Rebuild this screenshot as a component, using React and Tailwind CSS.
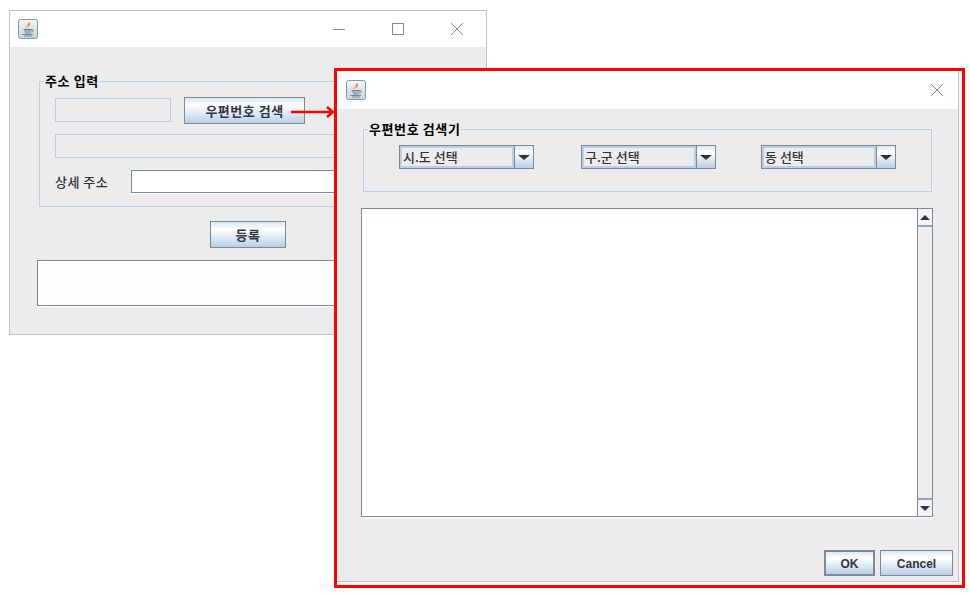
import React from 'react';

const KR = "font-['Noto_Sans_CJK_KR','Liberation_Sans',sans-serif]";
const BTN = 'bg-[linear-gradient(#dde8f3,#ffffff_30%,#b8cfe5)] border border-[#7a8a99]';

// Java coffee cup in the title bar
const JavaIcon = () => (
  <svg width="20" height="20" viewBox="0 0 20 20" className="block">
    <defs>
      <linearGradient id="tile" x1="0" y1="0" x2="0" y2="1">
        <stop offset="0" stopColor="#f4f4f4" />
        <stop offset="1" stopColor="#c9d3dc" />
      </linearGradient>
    </defs>
    <rect x="0.5" y="0.5" width="19" height="19" rx="2" fill="url(#tile)" stroke="#7f9bb0" />
    <path d="M10.500 2.500c1 1.500-1.500 2.500-1 4.500.2.8.6 1.300 1 1.500-.2-1 .3-1.500 1.200-2.300C12.800 5.300 12 3.500 10.500 2.500z" fill="#e8873a" />
    <path d="M7 8c.8-1 1.500-1.200 2-1.500-.5 1-.5 1.500 0 2.500-1 0-1.700-.3-2-1z" fill="#f0a868" />
    <path d="M5.500 10.500h8.500M6 12h7.500M7 14h5.500" stroke="#5f7f9a" strokeWidth="1" fill="none" />
    <path d="M14 10.500c1.800 0 1.800 2.500-.8 2.700" stroke="#5f7f9a" strokeWidth="1" fill="none" />
    <path d="M4 15.500h11M6 17h8" stroke="#6f8ca5" strokeWidth="1" fill="none" />
  </svg>
);

const CloseGlyph = () => (
  <svg width="14" height="14" viewBox="0 0 14 14" className="block">
    <path d="M1 1l12 12M13 1L1 13" stroke="#8a8a8a" strokeWidth="1" fill="none" />
  </svg>
);

const Group = ({ title, className, children }) => (
  <fieldset className={`border border-[#b8cfe5] ${className}`}>
    <legend className={`ml-[4px] px-[1px] h-[16px] leading-[16px] text-[13px] font-bold tracking-[0.6px] text-black ${KR}`}>{title}</legend>
    {children}
  </fieldset>
);

const Button = ({ className, children }) => (
  <button className={`${BTN} flex items-center justify-center text-[13px] font-bold tracking-[0.5px] text-[#333344] ${KR} ${className}`}>
    {children}
  </button>
);

const Combo = ({ label }) => (
  <div className="flex w-[135px] h-[24px] border border-[#7a8a99]">
    <div className={`flex-1 bg-[#ececec] border-2 border-[#b8cfe5] pl-[1px] text-[13px] leading-[18px] font-medium text-[#333333] ${KR}`}>{label}</div>
    <div className={`w-[19px] ${BTN} !border-y-0 !border-r-0 flex items-center justify-center`}>
      <div className="w-0 h-0 border-x-[6px] border-x-transparent border-t-[5px] border-t-[#333333]" />
    </div>
  </div>
);

const ScrollArrow = ({ up }) => (
  <div className="h-[16px] flex items-center justify-center bg-[#f2f4f7]">
    <div className={`w-0 h-0 border-x-[5px] border-x-transparent ${up ? 'border-b-[5px] border-b-[#333333]' : 'border-t-[5px] border-t-[#333333]'}`} />
  </div>
);

const App = () => (
  <div className="relative w-[970px] h-[596px] bg-white overflow-hidden">
    {/* address input window */}
    <div className="absolute left-[9px] top-[10px] w-[478px] h-[325px] border border-[#c0c0c0] flex flex-col">
      <div className="h-[36px] bg-white flex items-center pl-[8px] shrink-0">
        <JavaIcon />
        <div className="ml-auto flex items-center pr-[22px]">
          <div className="w-[12px] h-px bg-[#8a8a8a] mr-[47px]" />
          <div className="w-[12px] h-[12px] border border-[#8a8a8a] mr-[46px]" />
          <CloseGlyph />
        </div>
      </div>
      <div className="flex-1 bg-[#ececec] pl-[27px] pt-[26px]">
        <Group title="주소 입력" className="ml-[2px] w-[432px] pb-[13px]">
          <div className="pl-[15px]">
            <div className="flex items-start pt-[8px]">
              <div className="mt-[1px] w-[116px] h-[24px] border border-[#b8cfe5]" />
              <Button className="ml-[13px] w-[121px] h-[27px]">우편번호 검색</Button>
            </div>
            <div className="mt-[10px] w-[300px] h-[24px] border border-[#b8cfe5]" />
            <div className="mt-[12px] flex items-center">
              <span className={`w-[76px] text-[13px] leading-[23px] tracking-[0.5px] font-medium text-[#333333] ${KR}`}>상세 주소</span>
              <div className="w-[300px] h-[23px] bg-white border border-[#7a8a99] shadow-[0_1px_0_#ffffff]" />
            </div>
          </div>
        </Group>
        <Button className="mt-[14px] ml-[173px] w-[76px] h-[27px]">등록</Button>
        <div className="mt-[12px] w-[420px] h-[46px] bg-[#fdfdfd] border-l border-t border-b border-[#7a8a99] shadow-[0_1px_0_#ffffff]" />
      </div>
    </div>

    {/* arrow between the button and the dialog */}
    <svg width="46" height="14" viewBox="0 0 46 14" className="absolute left-[290px] top-[105px]">
      <path d="M1 7h42M37 2l6 5-6 5" stroke="#ff0000" strokeWidth="2.400" fill="none" />
    </svg>

    {/* zip code dialog, red highlight around it */}
    <div className="absolute left-[334px] top-[68px] w-[631px] h-[520px] border-[3px] border-[#ff0000] bg-[#f7f7f7] pr-[3px] pb-[3px]">
      <div className="h-full flex flex-col border-r border-b border-[#c0c0c0]">
        <div className="h-[38px] bg-white flex items-center pl-[9px] shrink-0">
          <JavaIcon />
          <div className="ml-auto pr-[14px]">
            <CloseGlyph />
          </div>
        </div>
        <div className="flex-1 bg-[#ececec] pl-[24px] pt-[12px]">
          <Group title="우편번호 검색기" className="ml-[2px] w-[569px] pb-[22px]">
            <div className="flex pl-[35px] pt-[8px]">
              <Combo label="시.도 선택" />
              <div className="w-[47px]" />
              <Combo label="구.군 선택" />
              <div className="w-[45px]" />
              <Combo label="동 선택" />
            </div>
          </Group>
          <div className="mt-[16px] w-[572px] h-[309px] bg-white border border-[#7a8a99] flex justify-end shadow-[0_1px_0_#ffffff]">
            <div className="w-[15px] h-full bg-[#eeeeee] border-l border-[#7a8a99] flex flex-col">
              <div className="border-b-2 border-[#8fa5b8]"><ScrollArrow up /></div>
              <div className="flex-1" />
              <div className="border-t-2 border-[#8fa5b8]"><ScrollArrow /></div>
            </div>
          </div>
          <div className="mt-[33px] flex justify-end gap-[5px] pr-[5px]">
            <button className={`${BTN} !border-2 w-[51px] h-[26px] pt-[1px] text-[12px] font-bold text-[#333344] font-['Liberation_Sans',sans-serif]`}>OK</button>
            <button className={`${BTN} w-[73px] h-[26px] pt-[1px] text-[12px] font-bold text-[#333344] font-['Liberation_Sans',sans-serif]`}>Cancel</button>
          </div>
        </div>
      </div>
    </div>
  </div>
);

export default App;
